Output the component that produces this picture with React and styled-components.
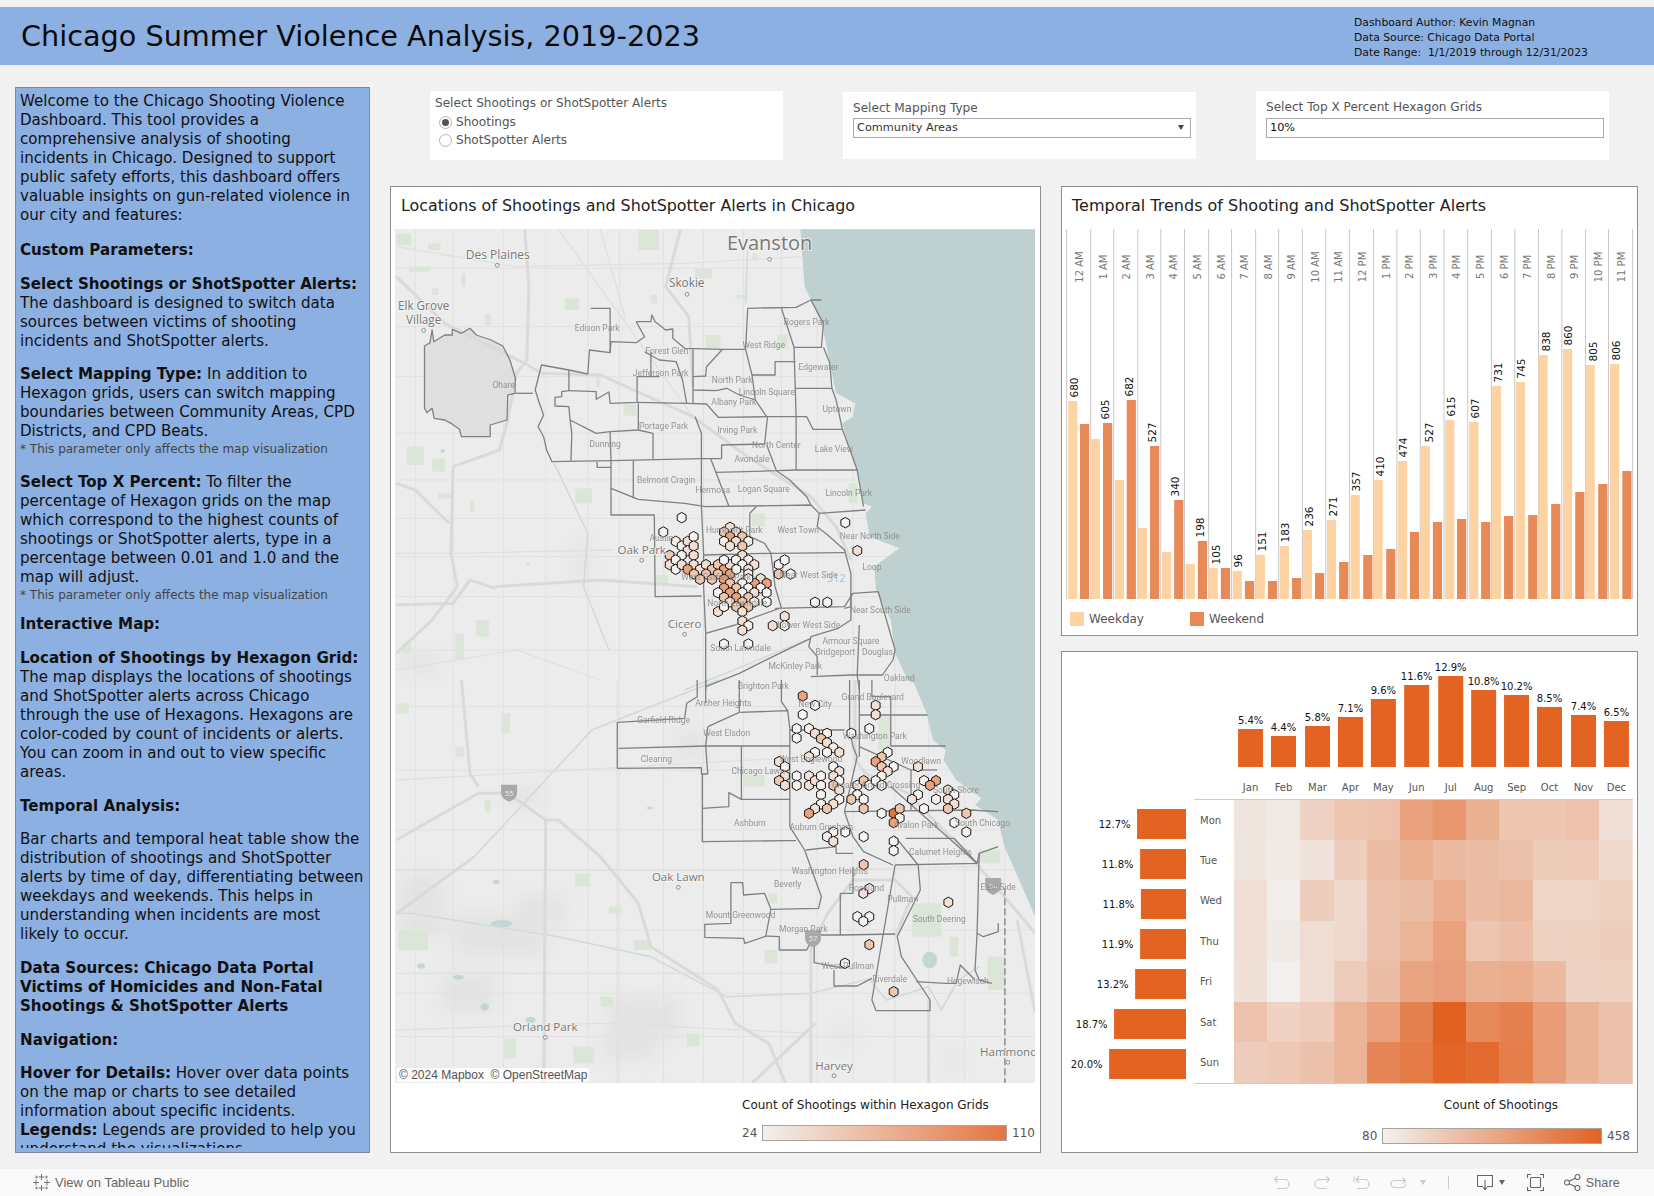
import React from 'react';
import styled, { createGlobalStyle } from 'styled-components';

const Global = createGlobalStyle`
  * { box-sizing: border-box; }
  html, body { margin: 0; padding: 0; background: #f1f1f1; }
  body { font-family: "DejaVu Sans", sans-serif; overflow: hidden; }
`;

const Page = styled.div`
  width: 1654px;
  height: 1196px;
  padding-top: 7px;
  display: flex;
  flex-direction: column;
`;

const Header = styled.header`
  height: 58px;
  background: #8cb0e2;
  display: flex;
  align-items: center;
  justify-content: space-between;
  padding-left: 21px;
`;

const Title = styled.h1`
  margin: 0;
  font-size: 28.7px;
  font-weight: 400;
  color: #0a0a0a;
`;

const Credits = styled.div`
  width: 300px;
  font-size: 10.8px;
  line-height: 15px;
  color: #111;
  white-space: pre;
  margin-top: 2px;
`;

const Main = styled.main`
  flex: 1;
  display: flex;
  gap: 20px;
  padding: 22px 16px 16px 15px;
  min-height: 0;
`;

const Intro = styled.aside`
  width: 355px;
  flex: none;
  background: #8cb0e2;
  border: 1px solid #808a96;
  padding: 4px 4px 4px;
`;

const IntroText = styled.div`
  height: 100%;
  overflow: hidden;
  font-size: 15.1px;
  line-height: 19px;
  color: #111;
`;

const Para = styled.p`
  margin: 0 0 ${(p) => p.$gap ?? 14.7}px;
`;

const Note = styled.span`
  display: block;
  font-size: 12px;
  line-height: 16.5px;
  color: #444;
`;

const Workspace = styled.div`
  flex: 1;
  display: flex;
  flex-direction: column;
  min-width: 0;
`;

const Filters = styled.div`
  height: 99px;
  display: flex;
  gap: 60px;
  padding: 4px 0 0 40px;
`;

const Filter = styled.div`
  width: 353px;
  height: ${(p) => p.$h ?? 69}px;
  margin-top: ${(p) => p.$top ?? 0}px;
  background: #fff;
  padding: ${(p) => p.$pad ?? '5px 5px'};
  font-size: 12.1px;
  color: #555;
`;

const FilterLabel = styled.div`
  line-height: 15px;
  margin-bottom: ${(p) => p.$gap ?? 2}px;
`;

const RadioRow = styled.div`
  display: flex;
  align-items: center;
  gap: 4px;
  height: 18px;
  padding-left: 4px;
`;

const Radio = styled.span`
  width: 13px;
  height: 13px;
  border-radius: 50%;
  border: 1px solid #b5b5b5;
  display: flex;
  align-items: center;
  justify-content: center;
  &::after {
    content: '';
    width: 7px;
    height: 7px;
    border-radius: 50%;
    background: ${(p) => (p.$on ? '#555' : 'transparent')};
  }
`;

const Field = styled.div`
  height: 20px;
  border: 1px solid #aaa;
  background: #fff;
  display: flex;
  align-items: center;
  justify-content: space-between;
  padding: 0 6px 1px 3px;
  font-size: 11.3px;
  color: ${(p) => p.$color ?? '#333'};
`;

const Caret = styled.span`
  width: 0;
  height: 0;
  border-left: 3px solid transparent;
  border-right: 3px solid transparent;
  border-top: 5px solid #444;
`;

const Boards = styled.div`
  flex: 1;
  display: flex;
  gap: 20px;
  min-height: 0;
`;

const Stack = styled.div`
  width: 577px;
  display: flex;
  flex-direction: column;
  gap: 15px;
`;

const Card = styled.section`
  background: #fff;
  border: 1px solid #8f8f8f;
  display: flex;
  flex-direction: column;
  flex: ${(p) => p.$flex ?? 'none'};
  height: ${(p) => (p.$h ? `${p.$h}px` : 'auto')};
  width: ${(p) => (p.$w ? `${p.$w}px` : 'auto')};
`;

const CardTitle = styled.h2`
  margin: 0;
  height: 42px;
  padding: 8px 10px 0;
  font-size: ${(p) => p.$size ?? 16}px;
  line-height: 21px;
  font-weight: 400;
  color: #222;
`;

const MapFrame = styled.div`
  position: relative;
  width: 640px;
  height: 854px;
  margin-left: 4px;
  overflow: hidden;
`;

const Attribution = styled.div`
  position: absolute;
  left: 2px;
  bottom: 1px;
  padding: 0 2px;
  background: rgba(255, 255, 255, 0.8);
  font-family: "Liberation Sans", Arial, sans-serif;
  font-size: 12px;
  line-height: 14px;
  color: #555;
  white-space: pre;
`;

const Svg = styled.svg`
  display: block;
  font-family: "DejaVu Sans", sans-serif;
`;

const Legend = styled.div`
  width: ${(p) => p.$w}px;
  margin: ${(p) => p.$top}px ${(p) => p.$right}px 0 auto;
`;

const LegendTitle = styled.div`
  font-size: 12px;
  line-height: 14px;
  color: #222;
  text-align: ${(p) => p.$align ?? 'left'};
  padding-left: ${(p) => p.$indent ?? 0}px;
  margin-bottom: ${(p) => p.$gap}px;
`;

const RampRow = styled.div`
  display: flex;
  align-items: center;
  gap: 5px;
  font-size: 12px;
  color: #555;
`;

const Ramp = styled.div`
  flex: 1;
  height: 16px;
  border: 1px solid #aaa39b;
  background: linear-gradient(to right, #f1f0ee, ${(p) => p.$to});
`;

const KeyRow = styled.div`
  display: flex;
  padding: 12px 0 0 8px;
`;

const Key = styled.div`
  width: 120px;
  display: flex;
  align-items: center;
  gap: 5px;
  font-size: 12px;
  color: #555;
`;

const Swatch = styled.span`
  width: 14px;
  height: 14px;
  background: ${(p) => p.$color};
`;

const Toolbar = styled.footer`
  height: 27px;
  background: #fafafa;
  display: flex;
  align-items: center;
  padding: 0 34px 0 33px;
  font-family: "Liberation Sans", Arial, sans-serif;
  font-size: 13px;
  color: #666;
`;

const TableauLink = styled.div`
  display: flex;
  align-items: center;
  gap: 5px;
  margin-right: auto;
  font-weight: 500;
`;

const Tools = styled.div`
  display: flex;
  align-items: center;
`;

const Tool = styled.svg`
  display: block;
  margin-left: ${(p) => p.$left ?? 0}px;
  fill: none;
  stroke: ${(p) => (p.$off ? '#c9c9c9' : '#666')};
  stroke-width: 1.1;
`;

const Divider = styled.span`
  width: 1px;
  height: 13px;
  background: #ccc;
  margin-left: 22px;
`;

const ToolCaret = styled.span`
  width: 0;
  height: 0;
  margin-left: ${(p) => p.$left}px;
  border-left: 3.5px solid transparent;
  border-right: 3.5px solid transparent;
  border-top: 5px solid ${(p) => (p.$off ? '#c9c9c9' : '#666')};
`;

const ShareText = styled.span`
  margin-left: 5px;
  font-size: 12.5px;
  font-weight: 500;
  letter-spacing: 0.2px;
`;

// --- chart data, read off the reference in page pixels / zoom units

const hours = ['12 AM','1 AM','2 AM','3 AM','4 AM','5 AM','6 AM','7 AM','8 AM','9 AM','10 AM','11 AM','12 PM','1 PM','2 PM','3 PM','4 PM','5 PM','6 PM','7 PM','8 PM','9 PM','10 PM','11 PM'];
const edges = [33,96,156,219,279,341,404,464,527,587,649,710,772,835,896,957,1019,1081,1143,1204,1266,1327,1389,1449,1512];
const dayLeft = [37,96,159,219,282,344,404,467,527,590,650,713,775,835,899,958,1022,1085,1144,1207,1266,1330,1389,1453];
const endLeft = [68,128,190,251,314,376,436,499,559,622,682,745,808,868,930,990,1053,1116,1176,1239,1299,1362,1422,1485];
const dayTop = [633,747,870,1014,1086,1122,1134,1143,1095,1068,1020,990,915,870,813,768,690,696,588,576,495,477,525,522];
const endTop = [702,699,630,768,930,1053,1134,1173,1173,1164,1149,1116,1095,1077,1026,996,987,996,978,975,942,906,882,843];
const peaks = [680,605,682,527,340,198,105,96,151,183,236,271,357,410,474,527,615,607,731,745,838,860,805,806];
const peakX = [52,133,197,256,318,381,423,482,545,605,667,730,790,853,913,980,1037,1100,1162,1222,1285,1345,1408,1468];

const tx = (z) => 1054 + z / 2.613;
const ty = (z) => 190 + z / 3;
const hy = (z) => 650 + z / 3;

const months = ['Jan','Feb','Mar','Apr','May','Jun','Jul','Aug','Sep','Oct','Nov','Dec'];
const monthPct = ['5.4%','4.4%','5.8%','7.1%','9.6%','11.6%','12.9%','10.8%','10.2%','8.5%','7.4%','6.5%'];
const monthX = [481,567,656,742,828,915,1004,1090,1176,1262,1351,1437];
const monthTop = [237,258,228,201,147,105,78,120,135,171,195,213];
const cellX = [470,557,643,732,818,904,990,1077,1163,1252,1338,1424,1511];
const cellY = [449,570,690,813,933,1056,1176,1299];
const days = ['Mon','Tue','Wed','Thu','Fri','Sat','Sun'];
const dayY = [510,632,752,875,995,1118,1238];
const dayPct = ['12.7%','11.8%','11.8%','11.9%','13.2%','18.7%','20.0%'];
const dayBar = [217,225,227,225,212,157,144];
const heat = [
  [.08,.04,.2,.3,.32,.55,.62,.45,.3,.3,.32,.12],
  [.07,.05,.09,.24,.36,.45,.38,.36,.33,.26,.27,.16],
  [.12,.02,.24,.16,.33,.36,.47,.36,.4,.19,.19,.22],
  [.12,.04,.13,.17,.33,.42,.55,.3,.35,.22,.22,.24],
  [.11,0,.13,.25,.36,.53,.57,.45,.47,.38,.2,.22],
  [.32,.2,.25,.42,.56,.78,1,.72,.78,.58,.43,.33],
  [.25,.28,.33,.42,.75,.82,.98,.93,.8,.58,.43,.33],
];
const heatColor = (t) => {
  const mix = (a, b) => Math.round(a + (b - a) * t);
  return `rgb(${mix(241, 226)},${mix(240, 97)},${mix(238, 34)})`;
};

// --- map data, in zoomed units: x / 2.376, y / 3, south sheet shifted down 1380

const S = 1380;
const mx = (u) => 390 + u / 2.376;
const my = (v) => 220 + v / 3;
const pts = (a, off = 0) => {
  const out = [];
  for (let i = 0; i < a.length; i += 2) out.push(`${mx(a[i]).toFixed(1)},${my(a[i + 1] + off).toFixed(1)}`);
  return out.join(' ');
};

const lake = [975,28,985,200,1000,240,1028,320,1045,430,1060,520,1105,550,1100,590,1075,610,1090,680,1110,750,1125,850,1145,860,1130,880,1140,950,1210,985,1150,1040,1155,1110,1190,1200,1200,1300,1230,1380,1245,1390,1275,1480,1290,1560,1320,1590,1315,1620,1345,1680,1405,1735,1390,1755,1445,1800,1460,1880,1533,2090,1533,28];
const ohare = [82,565,82,378,95,368,100,330,104,365,130,345,148,345,148,328,170,340,190,325,205,345,240,360,268,378,285,420,298,475,297,520,280,525,278,600,238,615,238,650,170,650,165,628,145,610,130,600,105,595,100,565,88,578];

const bordersN = [
  [477,265,523,265,523,398,474,390,470,462,425,450,360,435,345,510,355,550,365,585,352,620,365,650,372,690,385,725,525,722,740,716,788,716],
  [298,520,340,520],
  [425,450,425,512,408,515,408,530,392,532,392,558,425,560,428,600,432,640,430,722],
  [425,512,490,515,490,538,520,516,523,550,587,547,587,470,640,470],
  [585,305,620,305,622,285,630,305,655,330,672,327,672,355,700,385,790,388,845,388],
  [585,305,605,350,585,368,525,365,523,398],
  [620,395,620,470],
  [605,395,640,420,680,425,695,480,705,550],
  [587,547,705,550,752,552,780,592,895,590,965,590],
  [720,388,720,470,750,468,752,440,790,388],
  [720,470,720,510,775,512,800,505,830,525,868,540,895,590],
  [720,510,720,552],
  [850,265,965,262,1000,240,1025,240],
  [850,265,845,388,860,465,868,540],
  [930,265,960,382,1025,382,1030,310,1000,240],
  [960,382,965,590,965,750],
  [860,465,915,465,915,425,963,425],
  [965,505,1050,505],
  [965,590,990,590,1005,628,1075,628],
  [1030,382,1045,430,1050,505,1060,540,1075,628,1090,680,1110,750,1125,860],
  [590,550,590,630,523,635,525,722],
  [428,600,490,640,523,635],
  [590,630,625,640,625,716],
  [725,590,740,640,740,716,740,860,745,1000,745,1100,750,1240,750,1410],
  [788,716,788,675,890,672,897,590],
  [762,716,805,858],
  [895,675,918,752,775,757],
  [525,722,525,885,628,885,630,1130,740,1128],
  [492,725,492,742,525,742],
  [578,722,578,835],
  [525,805,590,838,700,850,750,860,1000,855,1020,880,1130,870],
  [918,752,965,750,1110,750],
  [918,752,950,780,990,830,1000,855],
  [855,880,870,860],
  [855,880,855,950,890,970,905,1000,745,1005],
  [905,1000,1080,998],
  [1020,880,1015,920,1040,945,1080,990,1095,1060,1095,1160,1080,1165],
  [905,1000,915,1100,930,1165],
  [915,1165,1080,1160,1100,1120,1160,1115,1175,1180,1200,1290,1195,1320,1170,1365,1095,1365,1000,1370],
  [750,1240,820,1215,870,1190,925,1165],
  [1095,1120,1095,1200,1065,1225,1000,1250,995,1280,1015,1310,1015,1365],
  [750,1400,830,1360,950,1285,1000,1255],
  [1115,1215,1110,1365,1115,1410],
];

const bordersS = [
  [540,127,540,265,740,263,740,282,755,282],
  [543,205,750,198,835,198,950,198],
  [540,127,700,115,705,70,730,50,730,0],
  [755,140,830,97,830,0],
  [755,140,750,198,755,282],
  [832,97,945,92,950,145,950,198],
  [930,0,930,65,945,92],
  [750,0,750,70],
  [835,198,835,358,950,358,950,198],
  [742,282,742,485,940,482,965,482],
  [742,385,805,380,805,338,835,358],
  [950,150,1080,150],
  [950,358,950,440,985,510,1025,650,1018,685,905,688,890,640,840,645,838,608,810,608,810,730,748,733,748,772,840,775,843,790,890,770,893,768],
  [1092,0,1092,150,1100,200,1110,230,1080,395,1100,470,1125,515,1195,555],
  [1115,0,1115,230],
  [1115,105,1277,105],
  [1190,105,1190,198,1320,198],
  [1145,0,1145,50,1190,50,1190,105],
  [1115,200,1238,270,1238,390],
  [1238,270,1300,270],
  [1080,395,1380,390,1445,395],
  [1190,320,1395,550],
  [1225,475,1340,475,1395,550],
  [1200,470,1255,555,1260,630,1205,770,1215,830,1283,960,1283,992,1155,992,1145,960,1200,555],
  [1200,555,1395,550,1400,520,1445,500],
  [1400,520,1395,760,1410,770,1445,755,1445,730],
  [1395,760,1390,870,1400,900,1430,910],
  [1070,640,1100,640,1100,560],
  [988,510,1060,500,1060,520,1100,520],
  [1070,640,1070,765,1200,762],
  [905,688,893,768,925,770,925,810,990,810,1008,765,1070,765],
  [1008,765,1008,848,1080,865,1080,845],
  [1055,870,1055,918,1110,918,1145,895],
  [1250,905,1320,910,1345,910,1355,855,1390,900],
];

const highwaysN = [
  [320,28,330,200,325,420,300,460,280,600,260,690,150,740,145,1000,160,1100,100,1200,15,1300],
  [15,170,130,310,320,430,360,460,500,465,720,590,850,710,1000,830,1060,920,1095,1020],
  [250,1100,500,1080,730,1100],
  [15,1155,150,1150,190,1080,250,1105],
  [15,790,60,810,140,910],
  [690,28,655,200,710,290,720,500],
];
const highwaysS = [
  [15,480,210,340,280,340,370,420,400,420,500,530,590,670,620,800,780,930,820,1030,900,1090,940,1210],
  [1000,1210,1000,800,1040,700,1100,600,1200,600,1240,650,1200,770],
  [1280,1210,1280,960],
  [860,1210,1010,1030],
  [1105,0,1105,240,1130,280,1230,340,1400,560,1533,760],
  [170,0,190,280,210,320],
  [15,700,200,530],
  [370,420,365,1210],
  [1490,720,1533,1000],
];
const arterials = [
  [[400,28,720,590,930,780], 0],
  [[15,80,300,140,700,130,975,110], 0],
  [[15,1000,145,1000,530,990], 0],
  [[500,28,560,300], 0],
  [[15,1350,300,1290,500,1380], 0],
  [[15,300,1000,230], S],
  [[15,570,540,570,1000,570,1400,560], S],
  [[15,880,1000,880], S],
  [[15,1050,500,1030,1000,1060], S],
  [[540,0,540,1210], S],
];
const waterways = [
  [[15,700,50,700,400,770,620,830,800,950,1000,940,1145,895], S],
  [[15,705,200,530,480,150,520,130,780,0], S],
  [[850,90,845,250], 0],
  [[390,730,470,940,460,1100,520,1290], 0],
  [[700,1410,990,1260], 0],
  [[1140,900,1180,960,1280,920,1310,990,1350,900,1400,860], S],
];

const gridX = [60,150,270,370,470,545,650,745,840,930,1015,1100,1200,1280,1365,1461];
const gridY = [145,320,470,640,780,895,1010,1130,1290,1460,1650,1830,1950,2130,2320,2450];

const parks = [
  [15,40,35,35],[90,70,30,20],[45,140,50,15],[170,160,10,40],[100,205,15,20],[225,280,15,35],[415,235,35,35],[590,30,50,60],[725,145,40,30],[620,225,15,25],[820,225,30,10],[860,100,12,20],[750,345,35,40],[920,345,25,40],[555,552,30,35],[40,680,40,55],[100,715,30,40],[115,820,30,15],[190,840,10,35],[440,805,40,45],[860,880,30,40],[630,1065,30,30],[490,470,10,30],[1090,790,20,60],[1165,1120,25,60],[205,1200,30,50],[155,1240,20,80],[30,1270,20,30],
  [265,S+100,20,60],[225,S+360,15,35],[155,S+200,20,30],[15,S+70,30,30],[20,S+750,70,60],[270,S+1075,30,60],[435,S+1100,50,50],[705,S+1060,30,40],[1240,S+670,70,100],[1420,S+830,40,100],[840,S+285,50,35],[1160,S+110,30,100],[890,S+810,30,40],[440,S+580,35,40],[1330,S+770,20,60],[520,S+680,30,20],[1400,S+510,50,40],[580,S+780,40,30],[500,S+950,30,30],[900,S+640,20,30],
];
const ponds = [
  [240,S+720,50,22],[322,S+1010,24,20],[245,S+600,16,12],[215,S+970,20,22],[1265,S+815,35,50],[610,S+380,14,8],[65,S+850,18,16],[150,S+885,25,14],[195,590,12,12],[325,1030,6,6],[120,688,10,10],
];
const shades = [
  [150,S+700,220,130],[20,S+580,110,200],[120,S+880,130,120],[520,S+950,170,130],[500,S+1080,130,60],[270,S+320,90,60],[300,S+640,120,90],[680,S+150,70,90],[1040,S+1040,70,40],[20,1300,100,60],[440,950,30,150],[1310,S+1120,60,40],
];

const cities = [
  ['Evanston',902,68,20],['Des Plaines',256,105,12],['Skokie',705,190,11.8],['Elk Grove',80,257,11.7],['Village',80,300,11.7],['Oak Park',598,989,11.5],['Cicero',700,1212,11.5],
  ['Oak Lawn',685,S+590,11.5],['Orland Park',369,S+1040,11.6],['Harvey',1055,S+1157,11.5],['Hammonc',1468,S+1115,11.5],
];
const cityDots = [[255,136],[902,118],[706,223],[80,331],[598,1021],[700,1243],[685,S+622],[369,S+1072],[1055,S+1187],[1468,S+1147]];
const hoods = [
  ['Edison Park',492,324],['Forest Glen',658,394],['Jefferson Park',643,459],['Rogers Park',990,307],['West Ridge',888,376],['Edgewater',1018,442],['North Park',813,480],['Lincoln Square',895,517],['Albany Park',817,547],['Uptown',1062,568],['Portage Park',650,619],['Irving Park',825,631],['Dunning',511,673],['North Center',918,676],['Lake View',1055,688],['Avondale',860,718],['Ohare',270,495],['Belmont Cragin',656,781],['Hermosa',767,811],['Logan Square',888,808],['Lincoln Park',1090,820],['Humboldt Park',818,931],['West Town',970,931],['Near North Side',1140,949],['Austin',645,955],['Loop',1145,1042],['Near West Side',995,1066],['West Garfield Park',775,1072],['North Lawndale',825,1150],['Near South Side',1165,1170],['Lower West Side',995,1216],['South Lawndale',833,1285],['Armour Square',1095,1264],['Bridgeport',1058,1297],['Douglas',1158,1297],['McKinley Park',963,1338],['Oakland',1210,1375],
  ['Brighton Park',887,S+18],['Archer Heights',792,S+70],['Grand Boulevard',1147,S+52],['New City',1010,S+73],['Garfield Ridge',650,S+120],['West Elsdon',800,S+160],['Washington Park',1152,S+169],['Clearing',633,S+238],['West Englewood',1000,S+238],['Woodlawn',1262,S+244],['Chicago Lawn',875,S+273],['Greater Grand Crossing',1155,S+316],['South Shore',1345,S+330],['Ashburn',855,S+430],['Auburn Gresham',1025,S+442],['Avalon Park',1250,S+435],['South Chicago',1408,S+430],['Calumet Heights',1308,S+517],['Washington Heights',1045,S+574],['Beverly',945,S+613],['Roseland',1132,S+625],['East Side',1445,S+621],['Pullman',1218,S+658],['South Deering',1305,S+718],['Mount Greenwood',833,S+706],['Morgan Park',982,S+748],['West Pullman',1088,S+858],['Riverdale',1187,S+898],['Hegewisch',1373,S+902],
];
const shields = [[283,S+338,'55'],[1005,S+775,'57'],[1433,S+618,'94']];

const hexColors = ['#f7f3f0', '#f3dfd4', '#eec5ae', '#e9a27c', '#e5743a'];

// hexagon cells as x, y, level in 3x crops; first pair of each group is the crop origin
const hexGroups = [
  [640, 500, [125,53,0, 70,96,0, 107,124,0, 125,138,0, 143,124,1, 161,110,0, 143,152,1, 161,138,1, 125,166,0, 161,166,1, 89,166,2, 89,194,1, 107,180,0, 107,208,0, 125,194,1, 161,194,1, 143,208,3, 180,208,1, 198,194,1, 216,208,2, 234,194,2, 252,208,3, 270,194,1, 162,222,2, 198,222,2, 234,222,2, 270,222,3, 180,238,2, 216,238,2, 252,238,3, 270,82,1, 252,96,2, 288,96,1, 307,110,2, 270,110,3, 252,124,0, 288,124,1, 325,124,0, 270,138,1, 307,138,2, 307,166,1, 252,180,0, 288,180,0, 325,180,0, 307,194,0, 343,194,1, 289,208,0, 325,208,1, 325,222,0, 362,236,1, 344,250,3, 380,250,3, 325,236,0, 307,250,0, 270,250,2, 252,264,3, 289,264,2, 234,278,0, 325,264,0, 362,264,0, 270,278,3, 307,278,0, 343,278,1, 380,278,0, 252,292,2, 289,292,3, 325,292,2, 380,306,0, 270,306,1, 307,306,2, 343,306,0, 234,335,1, 252,320,0, 289,320,2, 325,320,2, 307,335,1, 307,363,1, 325,377,0, 307,391,1, 416,194,0, 434,180,0, 416,222,2, 452,222,0, 398,377,1, 434,349,1, 434,377,0, 252,432,0, 325,432,0, 525,307,0, 562,307,0, 616,68,0, 652,152,1]],
  [770, 680, [98,48,3, 135,76,0, 98,104,0, 317,76,1, 317,104,1, 298,146,0, 80,146,0, 117,146,0, 135,160,1, 171,160,0, 153,176,2, 80,174,0, 171,188,1, 190,203,0, 171,217,0, 208,217,1, 135,217,0, 117,230,1, 244,160,0, 353,217,0, 335,231,2, 317,245,3, 335,260,2, 371,260,0, 353,274,1, 335,288,0, 444,260,1, 27,245,1, 45,260,0, 45,288,1, 27,302,2, 45,316,1, 80,288,0, 80,316,0, 117,288,1, 117,316,1, 135,302,1, 153,288,0, 153,316,0, 190,260,0, 208,274,1, 190,288,1, 208,302,0, 190,316,2, 208,330,1, 153,344,0, 208,358,0, 153,372,0, 190,372,1, 135,386,1, 171,386,2, 117,400,3, 262,316,0, 281,302,2, 298,316,0, 317,302,0, 335,316,0, 262,344,0, 281,358,0, 244,358,2, 281,386,2, 335,400,0, 371,400,4, 389,386,2, 389,414,0, 371,428,3, 462,302,0, 498,302,3, 480,316,3, 444,344,0, 426,358,1, 498,358,0, 534,330,1, 553,344,0, 534,358,1, 553,372,1, 534,386,2, 462,386,0, 589,400,2, 553,428,0, 589,456,0, 190,456,0, 171,470,0, 190,484,1, 226,456,0, 281,470,0, 371,484,0, 371,512,0, 281,554,2]],
  [820, 840, [148,146,0, 130,160,1, 112,230,0, 148,230,0, 130,244,0, 148,314,2, 75,370,0, 221,455,2, 385,187,1]],
  [390, 220, [2295,774,2, 2796,3918,0]],
];

const hexes = hexGroups.flatMap(([ox, oy, list]) => {
  const out = [];
  for (let i = 0; i < list.length; i += 3) out.push({ x: ox + list[i] / 3, y: oy + list[i + 1] / 3, level: list[i + 2] });
  return out;
});
const hexPoints = (x, y) => {
  const w = 4.4, h = 5.2, k = 2.7;
  return `${x},${y - h} ${x + w},${y - k} ${x + w},${y + k} ${x},${y + h} ${x - w},${y + k} ${x - w},${y - k}`;
};

const MapView = () => (
  <Svg width="640" height="854" viewBox="395 229 640 854">
    <defs>
      <filter id="soft" x="-30%" y="-30%" width="160%" height="160%">
        <feGaussianBlur stdDeviation="9" />
      </filter>
      <filter id="softer"><feGaussianBlur stdDeviation="0.7" /></filter>
    </defs>
    <rect x="395" y="229" width="640" height="854" fill="#ececec" />
    <g fill="#e3e4e2" filter="url(#soft)">
      {shades.map(([u, v, w, h], i) => <rect key={i} x={mx(u)} y={my(v)} width={w / 2.376} height={h / 3} />)}
    </g>
    <g stroke="#e1e1e1" strokeWidth="1">
      {gridX.map((u) => <line key={u} x1={mx(u)} x2={mx(u)} y1="229" y2="1083" />)}
      {gridY.map((v) => <line key={v} y1={my(v)} y2={my(v)} x1="395" x2="1035" />)}
    </g>
    <g filter="url(#softer)">
      <g fill="#dbe6d8">
        {parks.map(([u, v, w, h], i) => <rect key={i} x={mx(u)} y={my(v)} width={w / 2.376} height={h / 3} />)}
      </g>
      <g fill="#c4d5d5">
        {ponds.map(([u, v, w, h], i) => <ellipse key={i} cx={mx(u + w / 2)} cy={my(v + h / 2)} rx={w / 4.75} ry={h / 6} />)}
      </g>
      <polygon points={pts(ohare)} fill="#dfdfdf" />
      <g fill="none" stroke="#cfdcda" strokeWidth="1.6">
        {waterways.map(([a, off], i) => <polyline key={i} points={pts(a, off)} />)}
      </g>
      <g fill="none" stroke="#e0e0e0" strokeWidth="1.3">
        {arterials.map(([a, off], i) => <polyline key={i} points={pts(a, off)} />)}
      </g>
      <g fill="none" stroke="#dadada" strokeWidth="3" strokeLinejoin="round">
        {highwaysN.map((a, i) => <polyline key={i} points={pts(a)} />)}
        {highwaysS.map((a, i) => <polyline key={i} points={pts(a, S)} />)}
      </g>
      <polygon points={pts(lake)} fill="#bfd0d0" />
    </g>
    <g fill="none" stroke="#808080" strokeWidth="1.3" strokeLinejoin="round">
      <polygon points={pts(ohare)} />
      {bordersN.map((a, i) => <polyline key={i} points={pts(a)} />)}
      {bordersS.map((a, i) => <polyline key={i} points={pts(a, S)} />)}
    </g>
    <polyline points={pts([1461, 625, 1461, 1210], S)} fill="none" stroke="#777" strokeWidth="1.2" strokeDasharray="7 3" />
    {shields.map(([u, v, n]) => (
      <g key={n}>
        <path d={`M${mx(u) - 8} ${my(v) - 8}h16v8q0 6 -8 9q-8 -3 -8 -9z`} fill="#a9a9a9" />
        <text x={mx(u)} y={my(v) + 3} textAnchor="middle" fontSize="7.5" fill="#eee" fontFamily="Open Sans, sans-serif">{n}</text>
      </g>
    ))}
    <text x={mx(1060)} y={my(1086)} textAnchor="middle" fontSize="11" fill="#a9c3d2" fontFamily="Open Sans, sans-serif">312</text>
    <g stroke="#151515" strokeWidth="1">
      {hexes.map((h, i) => <polygon key={i} points={hexPoints(h.x, h.y)} fill={hexColors[h.level]} />)}
    </g>
    <g fontFamily="Open Sans, sans-serif" textAnchor="middle">
      {cityDots.map(([u, v], i) => <circle key={i} cx={mx(u)} cy={my(v)} r="1.9" fill="#f3f3f3" stroke="#777" strokeWidth="0.8" />)}
      {cities.map(([t, u, v, s]) => (
        <text key={t} x={mx(u)} y={my(v)} dy="0.35em" fontSize={s} fill="#777" stroke="#f4f4f4" strokeWidth="1.5" paintOrder="stroke">{t}</text>
      ))}
    </g>
    <g fontFamily="Roboto, sans-serif" textAnchor="middle" opacity="0.9">
      {hoods.map(([t, u, v]) => (
        <text key={t} x={mx(u)} y={my(v)} dy="0.35em" fontSize="8.5" fill="#8b8b8b">{t}</text>
      ))}
    </g>
  </Svg>
);

const TrendChart = () => (
  <Svg width="575" height="371" viewBox="1062 229 575 371">
    {edges.map((e) => <line key={e} x1={tx(e)} x2={tx(e)} y1="229" y2="599" stroke="#c8c8c8" />)}
    {dayTop.map((t, i) => <rect key={i} x={tx(dayLeft[i])} y={ty(t)} width="9.2" height={599 - ty(t)} fill="#fdd3a3" />)}
    {endTop.map((t, i) => <rect key={i} x={tx(endLeft[i])} y={ty(t)} width="9.2" height={599 - ty(t)} fill="#e88a58" />)}
    {hours.map((h, i) => {
      const x = tx((edges[i] + edges[i + 1]) / 2);
      return <text key={h} transform={`rotate(-90 ${x} 267)`} x={x} y="267" dy="0.45em" textAnchor="middle" fontSize="10" fill="#777">{h}</text>;
    })}
    {peaks.map((p, i) => {
      const top = ty(Math.min(dayTop[i], endTop[i])) - 3.5;
      const x = tx(peakX[i]);
      return <text key={i} transform={`rotate(-90 ${x} ${top})`} x={x} y={top} dy="0.36em" fontSize="10.5" fill="#111">{p}</text>;
    })}
  </Svg>
);

const HeatChart = () => (
  <Svg width="575" height="440" viewBox="1062 652 575 440">
    {monthTop.map((t, i) => {
      const x = tx(monthX[i]);
      const cx = x + 12.5;
      return (
        <g key={i}>
          <rect x={x} y={hy(t)} width="25" height={hy(351) - hy(t)} fill="#e26322" />
          <text x={cx} y={hy(t) - 5} textAnchor="middle" fontSize="10" fill="#111">{monthPct[i]}</text>
          <text x={cx} y="791" textAnchor="middle" fontSize="10" fill="#555">{months[i]}</text>
        </g>
      );
    })}
    {heat.map((row, r) => row.map((t, c) => (
      <rect key={`${r}-${c}`} x={tx(cellX[c])} y={hy(cellY[r])} width={tx(cellX[c + 1]) - tx(cellX[c]) + 0.5} height={hy(cellY[r + 1]) - hy(cellY[r]) + 0.5} fill={heatColor(t)} />
    )))}
    <line x1="1194" x2="1633" y1="799.5" y2="799.5" stroke="#ccc" />
    <line x1="1194" x2="1633" y1="1083.5" y2="1083.5" stroke="#ccc" />
    {days.map((d, i) => {
      const top = hy(477 + i * 120);
      const left = tx(dayBar[i]);
      return (
        <g key={d}>
          <rect x={left} y={top} width={1186 - left} height="30" fill="#e26322" />
          <text x={left - 6.5} y={top + 19} textAnchor="end" fontSize="10" fill="#111">{dayPct[i]}</text>
          <text x="1200" y={hy(dayY[i])} dy="0.36em" fontSize="10" fill="#555">{d}</text>
        </g>
      );
    })}
  </Svg>
);

const TableauMark = () => (
  <svg width="17" height="17" viewBox="0 0 17 17" fill="none" stroke="#777" strokeWidth="1">
    <path d="M8.5 0v6M5.5 3h6M8.5 11v6M5.5 14h6M0 8.5h6M3 5.5v6M11 8.5h6M14 5.5v6" />
    <path d="M3.5 1.5v3M2 3h3M13.5 1.5v3M12 3h3M3.5 12.5v3M2 14h3M13.5 12.5v3M12 14h3" strokeWidth="0.8" />
  </svg>
);

const Footer = () => (
  <Toolbar>
    <TableauLink><TableauMark />View on Tableau Public</TableauLink>
    <Tools>
      <Tool $off width="18" height="16" viewBox="0 0 18 16">
        <path d="M1.5 4.5h10a4.5 4.5 0 0 1 0 9h-7M4.5 1.5l-3 3 3 3" />
      </Tool>
      <Tool $off $left={22} width="18" height="16" viewBox="0 0 18 16">
        <path d="M16.5 4.5h-10a4.5 4.5 0 0 0 0 9h7M13.5 1.5l3 3-3 3" />
      </Tool>
      <Tool $off $left={22} width="18" height="16" viewBox="0 0 18 16">
        <path d="M1 1.5v6M3 4.5h8.5a4.5 4.5 0 0 1 0 9h-7M6 1.5l-3 3 3 3" />
      </Tool>
      <Tool $off $left={18} width="18" height="16" viewBox="0 0 18 16">
        <path d="M16.5 5.5h-11a3.5 3.5 0 0 0 0 7h8a3.5 3.5 0 0 0 3-4.5M13.5 2.5l3 3-3 3" />
      </Tool>
      <ToolCaret $off $left={13} />
      <Divider />
      <Tool $left={28} width="16" height="17" viewBox="0 0 16 17">
        <path d="M6 12.5H.5v-11h15v11H10M8 6v9" />
        <path d="M5.5 13.5h5L8 16.5z" fill="#666" stroke="none" />
      </Tool>
      <ToolCaret $left={6} />
      <Tool $left={22} width="17" height="17" viewBox="0 0 17 17">
        <path d="M.5 4V.5H4M13 .5h3.5V4M16.5 13v3.5H13M4 16.5H.5V13" />
        <rect x="3.5" y="3.5" width="10" height="10" rx="1" />
      </Tool>
      <Tool $left={20} width="17" height="17" viewBox="0 0 17 17">
        <circle cx="3" cy="8.5" r="2.5" />
        <circle cx="13.5" cy="3" r="2.5" />
        <circle cx="13.5" cy="14" r="2.5" />
        <path d="M5.2 7.3l6.1-3.1M5.2 9.7l6.1 3.1" />
      </Tool>
      <ShareText>Share</ShareText>
    </Tools>
  </Toolbar>
);

const App = () => (
  <Page>
    <Global />
    <Header>
      <Title>Chicago Summer Violence Analysis, 2019-2023</Title>
      <Credits>
        {'Dashboard Author: Kevin Magnan\nData Source: Chicago Data Portal\nDate Range:  1/1/2019 through 12/31/2023'}
      </Credits>
    </Header>
    <Main>
      <Intro>
        <IntroText>
          <Para $gap={16}>Welcome to the Chicago Shooting Violence Dashboard. This tool provides a comprehensive analysis of shooting<br />incidents in Chicago. Designed to support public safety efforts, this dashboard offers valuable insights on gun-related violence in our city and features:</Para>
          <Para><b>Custom Parameters:</b></Para>
          <Para><b>Select Shootings or ShotSpotter Alerts:</b> The dashboard is designed to switch data sources between victims of shooting incidents and ShotSpotter alerts.</Para>
          <Para><b>Select Mapping Type:</b> In addition to Hexagon grids, users can switch mapping boundaries between Community Areas, CPD Districts, and CPD Beats.<Note>* This parameter only affects the map visualization</Note></Para>
          <Para $gap={12.3}><b>Select Top X Percent:</b> To filter the percentage of Hexagon grids on the map which correspond to the highest counts of shootings or ShotSpotter alerts, type in a percentage between 0.01 and 1.0 and the map will adjust.<Note>* This parameter only affects the map visualization</Note></Para>
          <Para><b>Interactive Map:</b></Para>
          <Para><b>Location of Shootings by Hexagon Grid:</b> The map displays the locations of shootings and ShotSpotter alerts across Chicago through the use of Hexagons. Hexagons are color-coded by count of incidents or alerts. You can zoom in and out to view specific areas.</Para>
          <Para><b>Temporal Analysis:</b></Para>
          <Para>Bar charts and temporal heat table show the distribution of shootings and ShotSpotter alerts by time of day, differentiating between weekdays and weekends. This helps in understanding when incidents are most<br />likely to occur.</Para>
          <Para><b>Data Sources: Chicago Data Portal Victims of Homicides and Non-Fatal Shootings &amp; ShotSpotter Alerts</b></Para>
          <Para><b>Navigation:</b></Para>
          <Para $gap={0}><b>Hover for Details:</b> Hover over data points on the map or charts to see detailed information about specific incidents.</Para>
          <Para><b>Legends:</b> Legends are provided to help you understand the visualizations.</Para>
        </IntroText>
      </Intro>
      <Workspace>
        <Filters>
          <Filter>
            <FilterLabel>Select Shootings or ShotSpotter Alerts</FilterLabel>
            <RadioRow><Radio $on />Shootings</RadioRow>
            <RadioRow><Radio />ShotSpotter Alerts</RadioRow>
          </Filter>
          <Filter $h={67} $top={1} $pad="9px 5px 0 10px">
            <FilterLabel>Select Mapping Type</FilterLabel>
            <Field>Community Areas<Caret /></Field>
          </Filter>
          <Filter $pad="9px 5px 0 10px">
            <FilterLabel $gap={3}>Select Top X Percent Hexagon Grids</FilterLabel>
            <Field $color="#111">10%</Field>
          </Filter>
        </Filters>
        <Boards>
          <Card $w={651}>
            <CardTitle $size={15.9}>Locations of Shootings and ShotSpotter Alerts in Chicago</CardTitle>
            <MapFrame>
              <MapView />
              <Attribution>{'© 2024 Mapbox  © OpenStreetMap'}</Attribution>
            </MapFrame>
            <Legend $w={293} $top={14.5} $right={5}>
              <LegendTitle $gap={13.5}>Count of Shootings within Hexagon Grids</LegendTitle>
              <RampRow>24<Ramp $to="#e5753f" />110</RampRow>
            </Legend>
          </Card>
          <Stack>
            <Card $h={450}>
              <CardTitle>Temporal Trends of Shooting and ShotSpotter Alerts</CardTitle>
              <TrendChart />
              <KeyRow>
                <Key><Swatch $color="#fdd3a3" />Weekday</Key>
                <Key><Swatch $color="#e88a58" />Weekend</Key>
              </KeyRow>
            </Card>
            <Card $flex="1">
              <HeatChart />
              <Legend $w={268} $top={6} $right={7}>
                <LegendTitle $align="center" $indent={10} $gap={16}>Count of Shootings</LegendTitle>
                <RampRow>80<Ramp $to="#e26122" />458</RampRow>
              </Legend>
            </Card>
          </Stack>
        </Boards>
      </Workspace>
    </Main>
    <Footer />
  </Page>
);

export default App;
